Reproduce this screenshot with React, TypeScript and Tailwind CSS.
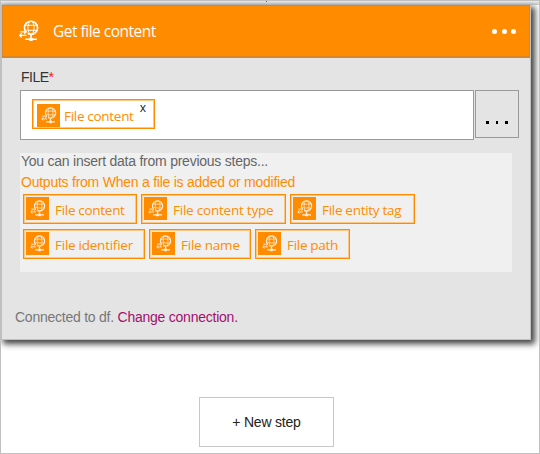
type IconProps = { className?: string };

function GlobeIcon({ className }: IconProps) {
  return (
    <svg viewBox="0 0 20 22" className={className} fill="none" stroke="#fff" aria-hidden="true">
      <circle cx="12" cy="7.8" r="6.6" strokeWidth="1.6" />
      <ellipse cx="12" cy="7.8" rx="3.1" ry="6.5" strokeWidth="0.9" />
      <path d="M6 5.3h12M6 10.3h12" strokeWidth="1" />
      <path d="M3 13h5.6" stroke="#ff8c00" strokeWidth="5" />
      <path d="M1.3 11.8h5.8M5.2 9.8l2.2 2-2.2 2M7.4 15.4H0.8M2.8 13.4l-2.2 2 2.2 2" strokeWidth="1.2" />
      <path d="M12 15v4M6.3 19.2h11.5" strokeWidth="1.5" />
      <path d="M10.3 19.4h3.4" strokeWidth="3.2" />
    </svg>
  );
}

type ChipProps = { label: string; box: string; text: string; removable?: boolean };

function Chip({ label, box, text, removable }: ChipProps) {
  return (
    <div className={`flex h-[30px] shrink-0 border border-[#ff8c00] shadow-[inset_0_0_0_1px_#ffc680] ${removable ? "bg-white pl-1 pt-1" : "pl-[2px] pt-[2px]"} ${box}`}>
      <span className="flex size-[23px] shrink-0 items-center justify-center bg-[#ff8c00]">
        <GlobeIcon className="h-[17px] w-4 opacity-85" />
      </span>
      <span className={`whitespace-nowrap font-['Open_Sans','Noto_Sans',sans-serif] text-[13.5px] leading-[20px] text-[#ff8c00] ${removable ? "ml-[4px] pt-[2px]" : "ml-[6px] pt-[3px]"} ${text}`}>
        {label}
      </span>
      {removable && (
        <span className="-mt-[3px] ml-[6px] font-['Open_Sans',sans-serif] text-[12px] leading-[14px] text-[#222]">x</span>
      )}
    </div>
  );
}

export default function App() {
  return (
    <main className="h-[454px] w-[540px] overflow-hidden border border-[#c0c0c0] bg-white font-['Liberation_Sans',Arial,sans-serif] text-[14px] tracking-[-0.24px]">
      <div className="flex h-1 items-start justify-center bg-gradient-to-b from-[#eee] to-[#c8c8c8]">
        <span className="-ml-[7px] h-px w-px bg-[#666]" />
      </div>
      <section className="h-[335px] w-[530px] border border-t-0 border-[#c0c0c0] bg-[#e4e4e4] shadow-[3px_3px_6px_1px_#444]">
        <header className="flex h-[53px] items-center border border-b-2 border-[#d9852a] bg-[#ff8c00] pl-4 pr-[13px]">
          <GlobeIcon className="h-[22px] w-5" />
          <h1 className="ml-[14px] whitespace-nowrap pt-px font-['Open_Sans','Noto_Sans',sans-serif] text-[15.5px] tracking-[-0.5px] text-white">
            Get file content
          </h1>
          <button className="ml-auto flex gap-[4.5px]" aria-label="More options">
            <i className="size-[5px] rounded-full bg-white" />
            <i className="size-[5px] rounded-full bg-white" />
            <i className="size-[5px] rounded-full bg-white" />
          </button>
        </header>
        <div className="pl-[18px] pt-[11px]">
          <div className="h-[21px] pl-px leading-[16px] tracking-[-0.5px] text-[#333]">
            FILE<span className="text-[#f02020]">*</span>
          </div>
          <div className="flex items-start gap-px">
            <div className="h-[50px] w-[454px] border border-[#999] bg-white pl-[11px] pt-2">
              <Chip label="File content" box="w-[123px]" text="tracking-[-0.3px]" removable />
            </div>
            <button className="flex h-[48px] w-[44px] justify-center gap-[7px] border border-[#999] pt-[30px]" aria-label="Browse">
              <i className="h-[3px] w-[2.5px] bg-black" />
              <i className="h-[3px] w-[2.5px] bg-black" />
              <i className="h-[3px] w-[2.5px] bg-black" />
            </button>
          </div>
          <div className="mt-[13px] h-[119px] w-[492px] bg-[#f0f0f0] pl-px">
            <p className="h-[21px] whitespace-nowrap pt-px leading-[15px] text-[#666]">You can insert data from previous steps...</p>
            <p className="h-5 whitespace-nowrap leading-[17px] text-[#ff8c00]">Outputs from When a file is added or modified</p>
            <div className="flex flex-col gap-[5px] pl-[2px]">
              <div className="flex gap-1">
                <Chip label="File content" box="w-[114px]" text="tracking-[-0.3px]" />
                <Chip label="File content type" box="w-[145px]" text="tracking-[-0.22px]" />
                <Chip label="File entity tag" box="w-[125px]" text="tracking-[-0.3px]" />
              </div>
              <div className="flex gap-1">
                <Chip label="File identifier" box="w-[122px]" text="tracking-[-0.25px]" />
                <Chip label="File name" box="w-[102px]" text="tracking-[-0.22px]" />
                <Chip label="File path" box="w-[95px]" text="tracking-[-0.3px]" />
              </div>
            </div>
          </div>
        </div>
        <p className="ml-[13px] mt-[37px] whitespace-nowrap leading-4 text-[#777]">
          Connected to df. <a className="text-[#a3106f]">Change connection.</a>
        </p>
      </section>
      <button className="ml-[198px] mt-[57px] block h-[50px] w-[135px] border border-[#c8c8c8] tracking-[-0.2px] text-[#222]">+ New step</button>
    </main>
  );
}
